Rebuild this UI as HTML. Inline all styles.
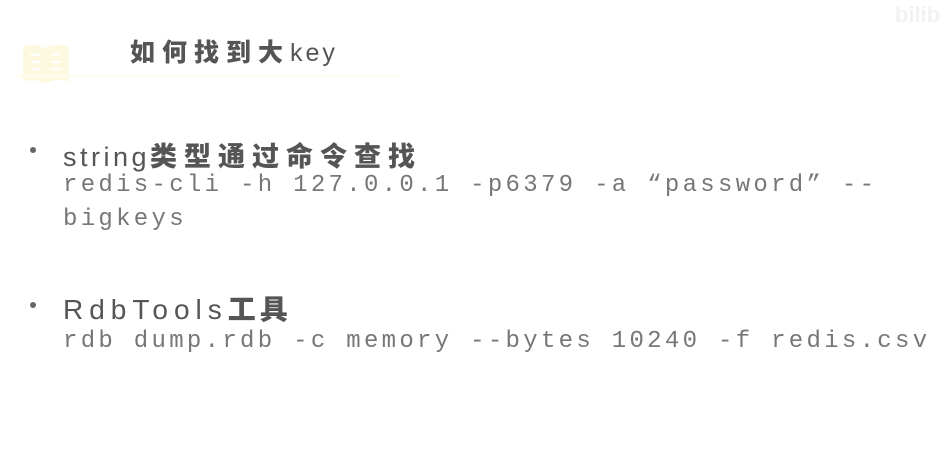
<!DOCTYPE html>
<html><head><meta charset="utf-8"><style>
body{margin:0;width:949px;height:452px;background:#fff;position:relative;overflow:hidden;font-family:"Liberation Sans","Noto Sans CJK SC",sans-serif;color:#555}
.a{position:absolute;white-space:pre}
.h{font-size:27px;color:#555}
.h b{font-weight:900;letter-spacing:7px}
.c{font-family:"Liberation Mono","Noto Serif CJK SC",monospace;font-size:24px;letter-spacing:3.3px;color:#777}
.dot{position:absolute;width:6px;height:6px;border-radius:50%;background:#666}
</style></head><body>
<div class="a" style="left:20px;top:22px;width:52px;height:46px">
<svg width="52" height="46" viewBox="0 0 50 44"><path d="M3 6 Q14 2 24 8 Q34 2 47 6 L47 40 Q34 36 24 42 Q14 36 3 40Z" fill="#fdf9e0"/><path d="M10 14h9M10 21h9M10 28h9M30 14h9M30 21h9M30 28h9" stroke="#fff" stroke-width="2"/></svg></div>
<div class="a" style="left:15px;top:74px;width:385px;height:3px;background:#fdfcee"></div>
<div class="a h" style="left:130px;top:33px;font-size:25px;letter-spacing:3px"><b style="letter-spacing:7px">如何找到大</b>key</div>
<div class="a" style="left:895px;top:2px;font-size:22px;font-weight:bold;color:#f2f2f2">bilib</div>
<div class="dot" style="left:30px;top:147px"></div>
<div class="a h" style="left:63px;top:135px;letter-spacing:3.5px">string<b>类型通过命令查找</b></div>
<div class="a c" style="left:63px;top:172px">redis-cli -h 127.0.0.1 -p6379 -a “password” --</div>
<div class="a c" style="left:63px;top:206px">bigkeys</div>
<div class="dot" style="left:30px;top:302px"></div>
<div class="a h" style="left:63px;top:288px;font-size:28px;letter-spacing:6px">RdbTools<b style="letter-spacing:4px">工具</b></div>
<div class="a c" style="left:63px;top:328px">rdb dump.rdb -c memory --bytes 10240 -f redis.csv</div>
</body></html>
